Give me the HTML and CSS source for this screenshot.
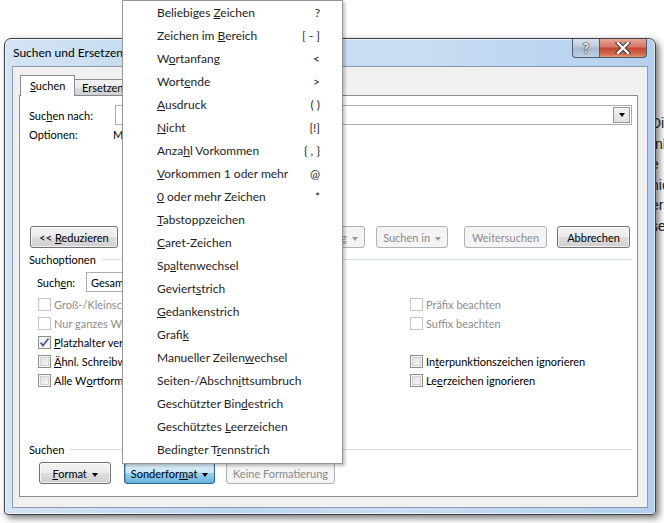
FILE: index.html
```html
<!DOCTYPE html>
<html lang="de">
<head>
  <meta charset="UTF-8">
  <title>Suchen und Ersetzen</title>
  <link rel="stylesheet" href="styles.css">
</head>
<body>

<!-- Dokument im Hintergrund -->
<div class="doc">
  <p>Dies ist ein Text</p>
  <p>Inhalt</p>
  <p>e</p>
  <p>nicht</p>
  <p>erst</p>
  <p>sein</p>
</div>

<div class="window">
  <div class="titlebar">
    <span class="title">Suchen und Ersetzen</span>
    <div class="caption">
      <div class="cap help">?</div>
      <div class="cap close">
        <svg width="16" height="12" viewBox="0 0 16 12">
          <path d="M3 1 L13 11 M13 1 L3 11" stroke="#3a3a3a" stroke-width="4.4" stroke-linecap="square"/>
          <path d="M3 1 L13 11 M13 1 L3 11" stroke="#fff" stroke-width="2.4" stroke-linecap="square"/>
        </svg>
      </div>
    </div>
  </div>

  <div class="client">
    <div class="tabs">
      <div class="tab active"><u>S</u>uchen</div>
      <div class="tab">Ersetzen</div>
      <div class="tab">Gehe zu</div>
    </div>

    <div class="panel">
      <div class="find-row">
        <label class="lbl-find">Suc<u>h</u>en nach:</label>
        <div class="combo wide">
          <span class="combo-text"></span>
          <span class="combo-btn"><i class="tri"></i></span>
        </div>
      </div>
      <div class="opts-row">
        <span class="lbl-opts">Optionen:</span>
        <span>Mustervergleich verwenden</span>
      </div>

      <div class="button-row">
        <button class="btn btn-less">&lt;&lt; <u>R</u>eduzieren</button>
        <div class="btn-group">
          <button class="btn btn-off btn-read">Lesehervorhebung <i class="tri tri-off"></i></button>
          <button class="btn btn-off btn-in">Suchen in <i class="tri tri-off"></i></button>
          <button class="btn btn-off btn-next">Weitersuchen</button>
          <button class="btn btn-cancel">Abbrechen</button>
        </div>
      </div>

      <div class="group-head first">
        <span>Suchoptionen</span>
        <span class="group-line"></span>
      </div>

      <div class="scope-row">
        <label>Such<u>e</u>n:</label>
        <div class="combo scope">
          <span class="combo-text">Gesamt</span>
          <span class="combo-btn"><i class="tri"></i></span>
        </div>
      </div>

      <div class="checks">
        <div class="check off"><span class="box"></span>Groß-/Kleinschreibung beachten</div>
        <div class="check off"><span class="box"></span>Präfix beachten</div>
        <div class="check off"><span class="box"></span>Nur ganzes Wort suchen</div>
        <div class="check off"><span class="box"></span>Suffix beachten</div>
        <div class="check"><span class="box checked">
          <svg width="11" height="11" viewBox="0 0 11 11"><path d="M1.5 5.5 L4 8.5 L9.5 1.5" fill="none" stroke="#4a5f97" stroke-width="1.8"/></svg>
        </span><u>P</u>latzhalter verwenden</div>
        <div class="check empty"></div>
        <div class="check"><span class="box"></span><u>Ä</u>hnl. Schreibweise (Englisch)</div>
        <div class="check"><span class="box"></span>In<u>t</u>erpunktionszeichen ignorieren</div>
        <div class="check"><span class="box"></span>Alle W<u>o</u>rtformen suchen (Englisch)</div>
        <div class="check"><span class="box"></span>Le<u>e</u>rzeichen ignorieren</div>
      </div>

      <div class="group-head second">
        <span>Suchen</span>
        <span class="group-line"></span>
      </div>

      <div class="bottom-row">
        <button class="btn btn-format"><u>F</u>ormat <i class="tri"></i></button>
        <button class="btn btn-pressed btn-special">Sonderfor<u>m</u>at <i class="tri"></i></button>
        <button class="btn btn-off btn-noformat">Keine Formatierung</button>
      </div>
    </div>
  </div>
</div>

<!-- Menü Sonderformat -->
<div class="menu">
  <div class="item"><span>Beliebiges <u>Z</u>eichen</span><span class="key">?</span></div>
  <div class="item"><span>Zeichen im <u>B</u>ereich</span><span class="key">[ - ]</span></div>
  <div class="item"><span>W<u>o</u>rtanfang</span><span class="key">&lt;</span></div>
  <div class="item"><span>Wort<u>e</u>nde</span><span class="key">&gt;</span></div>
  <div class="item"><span><u>A</u>usdruck</span><span class="key">( )</span></div>
  <div class="item"><span><u>N</u>icht</span><span class="key">[!]</span></div>
  <div class="item"><span>Anza<u>h</u>l Vorkommen</span><span class="key">{ , }</span></div>
  <div class="item"><span><u>V</u>orkommen 1 oder mehr</span><span class="key">@</span></div>
  <div class="item"><span><u>0</u> oder mehr Zeichen</span><span class="key">*</span></div>
  <div class="item"><span><u>T</u>abstoppzeichen</span></div>
  <div class="item"><span><u>C</u>aret-Zeichen</span></div>
  <div class="item"><span>Sp<u>a</u>ltenwechsel</span></div>
  <div class="item"><span>Geviert<u>s</u>trich</span></div>
  <div class="item"><span><u>G</u>edankenstrich</span></div>
  <div class="item"><span>Grafi<u>k</u></span></div>
  <div class="item"><span>Manueller Zeilen<u>w</u>echsel</span></div>
  <div class="item"><span>Seiten-/Abschn<u>i</u>ttsumbruch</span></div>
  <div class="item"><span>Geschützter Bin<u>d</u>estrich</span></div>
  <div class="item"><span>Geschütztes <u>L</u>eerzeichen</span></div>
  <div class="item"><span>Bedingter T<u>r</u>ennstrich</span></div>
</div>

</body>
</html>
```

FILE: styles.css
```css
* {
  box-sizing: border-box;
}

body {
  margin: 0;
  width: 664px;
  height: 523px;
  overflow: hidden;
  position: relative;
  background: #fff;
  font-family: Lato, "Noto Sans", Arial, sans-serif;
  font-size: 11px;
  color: #000;
}

u {
  text-decoration: underline;
  text-underline-offset: 1px;
}

/* Hintergrund-Dokument */
.doc {
  padding: 113px 0 0 651px;
  white-space: nowrap;
  overflow: hidden;
  font-family: "Liberation Sans", Arial, sans-serif;
  font-size: 14px;
  color: #222;
}

.doc p {
  margin: 0;
  height: 20.6px;
  line-height: 20.6px;
}

/* Fenster */
.window {
  position: absolute;
  left: 4px;
  top: 38px;
  width: 652px;
  height: 477px;
  border: 1px solid #3d4248;
  border-radius: 7px 7px 4px 4px;
  padding: 0 7px 6px 7px;
  display: flex;
  flex-direction: column;
  background: linear-gradient(to right, #d4e4f4 0%, #bcd6f0 35%, #c9def3 60%, #b3d0ee 100%);
  box-shadow: 3px 3px 7px rgba(0, 0, 0, 0.55), inset 0 0 0 1px rgba(255, 255, 255, 0.6);
}

.titlebar {
  height: 28px;
  display: flex;
  align-items: flex-start;
  justify-content: space-between;
}

.title {
  margin-top: 6px;
  padding-left: 1px;
  font-size: 12px;
  color: #000;
}

.caption {
  display: flex;
  margin-right: 1px;
}

.cap {
  height: 19px;
  border: 1px solid #4c5b6e;
  border-top: none;
  display: flex;
  align-items: center;
  justify-content: center;
}

.help {
  width: 28px;
  border-radius: 0 0 0 4px;
  background: linear-gradient(#d9e3ee, #bccbdc 45%, #a7b9cf 50%, #bccfe3);
  color: #fff;
  font-weight: bold;
  font-size: 13px;
  text-shadow: 0 0 1px #333, 0 0 1px #333, 0 0 2px #333;
}

.close {
  width: 47px;
  border-left: none;
  border-radius: 0 0 4px 0;
  background: linear-gradient(#e7a598, #d57765 45%, #c2452f 50%, #d26a4f 85%, #e49b7d);
}

.client {
  flex: 1;
  background: #f0f0f0;
  border: 1px solid #8b9bae;
  display: flex;
  flex-direction: column;
  padding-top: 9px;
}

/* Tabs */
.tabs {
  display: flex;
  align-items: flex-end;
  height: 19px;
  margin-left: 7px;
}

.tab {
  height: 16px;
  padding: 0 7px;
  border: 1px solid #898c95;
  border-bottom: none;
  border-left: none;
  background: linear-gradient(#f2f2f2, #ebebeb 50%, #dddddd 51%, #cfcfcf);
  line-height: 15px;
  white-space: nowrap;
}

.tab.active {
  height: 21px;
  margin-bottom: -1px;
  padding: 0 9px;
  border-left: 1px solid #898c95;
  background: #fff;
  line-height: 20px;
  position: relative;
  z-index: 1;
  width: 55px;
}

.panel {
  margin: 0 9px 10px 6px;
  height: 402px;
  border: 1px solid #898c95;
  background: #fff;
  padding: 9px 5px 0 9px;
}

.find-row {
  display: flex;
  align-items: center;
  height: 20px;
}

.lbl-find {
  width: 86px;
}

.combo {
  height: 20px;
  border: 1px solid #abadb3;
  background: #fff;
  display: flex;
  align-items: center;
  justify-content: space-between;
  padding: 1px;
}

.combo.wide {
  flex: 1;
}

.combo-text {
  padding-left: 3px;
}

.combo-btn {
  width: 17px;
  height: 16px;
  border: 1px solid #979797;
  background: linear-gradient(#f2f2f2, #e0e0e0);
  display: flex;
  align-items: center;
  justify-content: center;
}

.tri {
  display: inline-block;
  width: 0;
  height: 0;
  border-left: 3.5px solid transparent;
  border-right: 3.5px solid transparent;
  border-top: 4px solid #000;
  vertical-align: middle;
  margin-left: 2px;
}

.combo-btn .tri {
  margin-left: 0;
}

.tri-off {
  border-top-color: #9a9a9a;
}

.opts-row {
  display: flex;
  align-items: center;
  height: 19px;
}

.lbl-opts {
  width: 84px;
}

/* Buttons */
.button-row {
  margin-top: 82px;
  height: 22px;
  display: flex;
  justify-content: space-between;
  padding: 0 2px 0 1px;
}

.btn-group {
  display: flex;
}

.btn {
  height: 22px;
  padding: 0 4px;
  font-family: inherit;
  font-size: 11px;
  color: #000;
  border: 1px solid #707070;
  border-radius: 3px;
  background: linear-gradient(#f2f2f2, #ebebeb 50%, #dddddd 51%, #cfcfcf);
  box-shadow: inset 0 0 0 1px rgba(255, 255, 255, 0.7);
  white-space: nowrap;
}

.btn-off {
  color: #8a8a8a;
  border-color: #adb2b5;
  background: #f4f4f4;
  box-shadow: none;
}

.btn-pressed {
  border-color: #2c628b;
  background: linear-gradient(#e5f4fc, #c4e5f6 50%, #98d1ef 51%, #68b3db);
  box-shadow: inset 1px 1px 1px rgba(0, 0, 0, 0.2);
}

.btn-less {
  width: 88px;
}

.btn-read {
  width: 115px;
}

.btn-in {
  width: 72px;
  margin-left: 11px;
}

.btn-next {
  width: 83px;
  margin-left: 16px;
}

.btn-cancel {
  width: 73px;
  margin-left: 10px;
}

/* Gruppen */
.group-head {
  height: 16px;
  display: flex;
  align-items: center;
}

.group-head.first {
  margin-top: 3px;
}

.group-head.second {
  margin-top: 51px;
}

.group-line {
  flex: 1;
  height: 1px;
  background: #d5dfe5;
  margin: 1px 0 0 6px;
}

.scope-row {
  margin-top: 5px;
  height: 20px;
  display: flex;
  align-items: center;
  padding-left: 8px;
}

.scope-row label {
  width: 49px;
}

.combo.scope {
  width: 130px;
}

/* Checkboxen */
.checks {
  margin-top: 3px;
  padding-left: 9px;
  display: grid;
  grid-template-columns: 372px 1fr;
  grid-auto-rows: 19px;
}

.check {
  display: flex;
  align-items: center;
  white-space: nowrap;
}

.box {
  width: 13px;
  height: 13px;
  margin-right: 3px;
  border: 1px solid #8e8f8f;
  background: linear-gradient(135deg, #dcdcdc, #fbfbfb);
  box-shadow: inset 0 0 0 1px #f4f4f4, inset 0 0 0 2px #d2d2d2;
  display: flex;
  align-items: center;
  justify-content: center;
}

.box.checked {
  background: #f4f4f4;
  box-shadow: inset 0 0 0 1px #f4f4f4;
}

.check.off {
  color: #8d8d8d;
}

.check.off .box {
  border-color: #c4c4c4;
  background: #fff;
  box-shadow: none;
}

.bottom-row {
  margin-top: 5px;
  padding-left: 10px;
  display: flex;
}

.btn-format {
  width: 72px;
}

.btn-special {
  width: 91px;
  margin-left: 13px;
}

.btn-noformat {
  width: 109px;
  margin-left: 11px;
}

/* Menü */
.menu {
  position: absolute;
  left: 122px;
  top: 0;
  width: 221px;
  border: 1px solid #979797;
  background: #fff;
  padding: 0 0 2px;
  box-shadow: 2px 2px 3px rgba(0, 0, 0, 0.25);
  color: #1e1e1e;
  font-size: 12px;
}

.item {
  height: 23px;
  display: flex;
  align-items: center;
  justify-content: space-between;
  padding: 0 22px 0 34px;
  white-space: nowrap;
}

.key {
  text-align: right;
}
```
